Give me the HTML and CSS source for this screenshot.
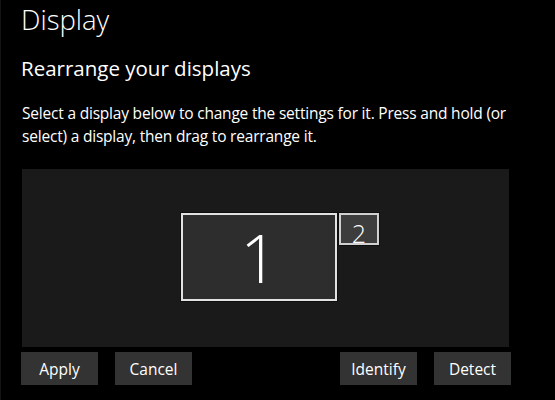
FILE: index.html
```html
<!DOCTYPE html>
<html lang="en">
<head>
<meta charset="utf-8">
<title>Display</title>
<link rel="stylesheet" href="styles.css">
</head>
<body>
<main class="page">
  <h1 class="title">Display</h1>
  <h2 class="subtitle">Rearrange your displays</h2>
  <p class="desc">Select a display below to change the settings for it. Press and hold (or select) a display, then drag to rearrange it.</p>
  <div class="canvas">
    <div class="monitor monitor-1"><span>1</span></div>
    <div class="monitor monitor-2"><span>2</span></div>
  </div>
  <div class="actions">
    <div class="group">
      <button class="btn">Apply</button>
      <button class="btn">Cancel</button>
    </div>
    <div class="group">
      <button class="btn">Identify</button>
      <button class="btn">Detect</button>
    </div>
  </div>
</main>
</body>
</html>
```

FILE: styles.css
```css
html, body {
  margin: 0;
  padding: 0;
  background: #000;
  height: 100%;
}
body {
  color: #fff;
  font-family: "Open Sans", "Noto Sans", sans-serif;
  border-left: 1px solid #141414;
  box-sizing: border-box;
}
.page {
  padding: 0 45px 0 20px;
}
.title {
  margin: 0;
  font-size: 27.5px;
  font-weight: 300;
  line-height: 40px;
}
.subtitle {
  margin: 14px 0 0;
  font-size: 20.5px;
  font-weight: 400;
  line-height: 28px;
}
.desc {
  margin: 20px 0 0 1px;
  font-size: 15.5px;
  letter-spacing: -0.2px;
  line-height: 23px;
}
.canvas {
  position: relative;
  margin: 21px 0 0 1px;
  width: 487px;
  height: 178px;
  background: #1a1a1a;
}
.monitor {
  position: absolute;
  box-sizing: border-box;
  display: flex;
  justify-content: center;
  color: #fff;
  box-shadow: 0 0 0 1px #0e0e0e;
}
.monitor-1 {
  left: 159px;
  top: 44px;
  width: 156px;
  height: 88px;
  background: #2d2d2d;
  border: 2px solid #e2e2e2;
  align-items: center;
  font-size: 66px;
  font-weight: 300;
  line-height: 1;
}
.monitor-2 {
  left: 317px;
  top: 44px;
  width: 40px;
  height: 32px;
  background: #3d3d3d;
  border: 2px solid #d0d0d0;
  align-items: flex-end;
  font-size: 25px;
  font-weight: 300;
  line-height: 20px;
}
.actions {
  display: flex;
  justify-content: space-between;
  margin-top: 5px;
  width: 490px;
}
.group {
  display: flex;
  gap: 17px;
}
.btn {
  width: 77px;
  height: 33px;
  padding: 0;
  border: none;
  background: #333;
  color: #fff;
  font-family: inherit;
  font-size: 15.5px;
}
```
